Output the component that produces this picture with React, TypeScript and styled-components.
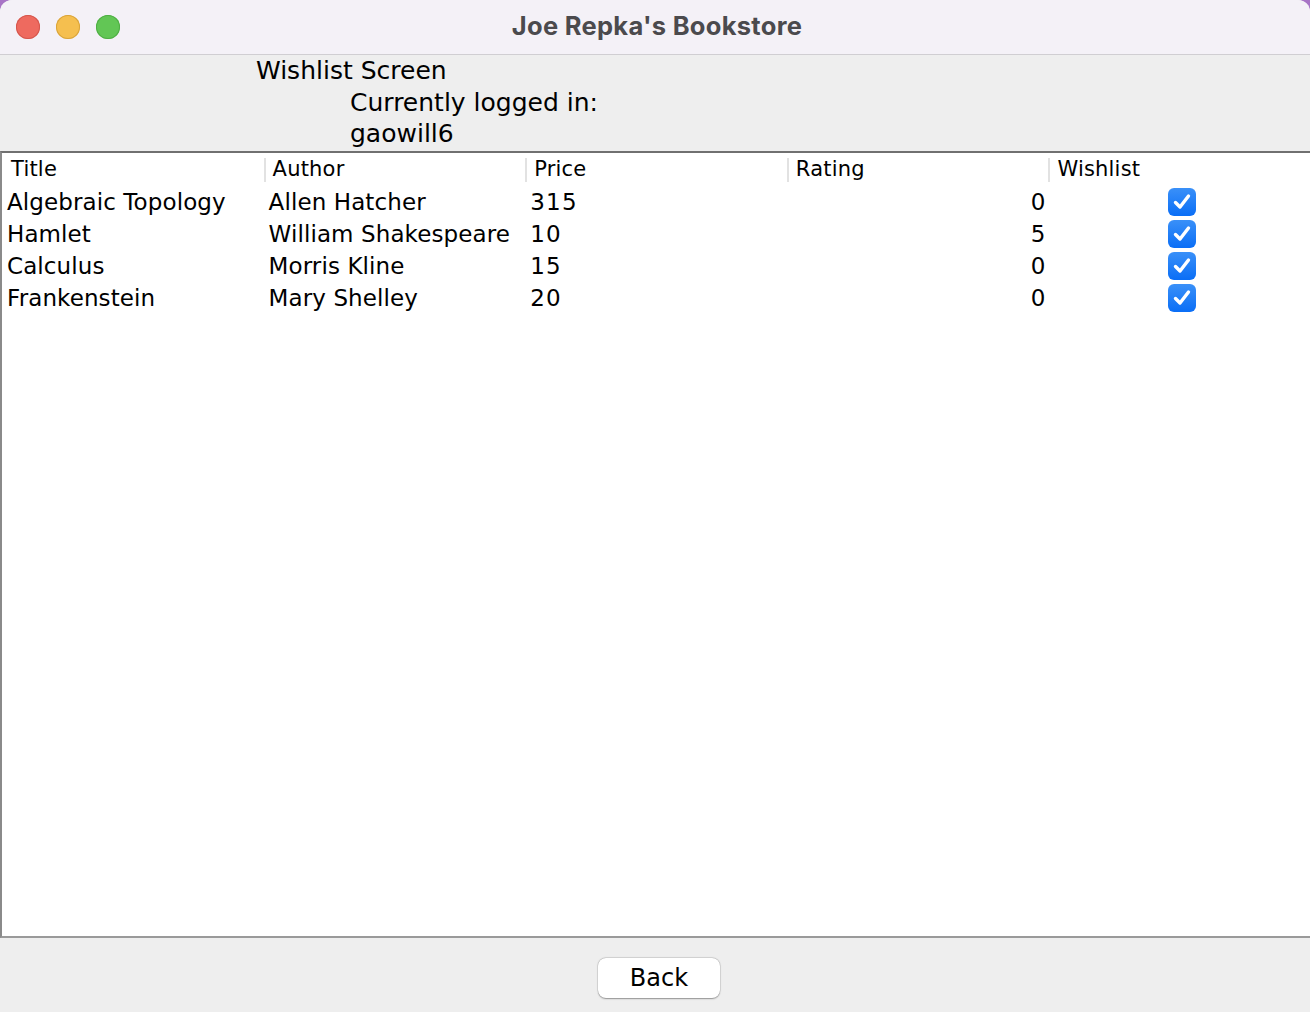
import React from "react";
import styled, { createGlobalStyle } from "styled-components";

const Global = createGlobalStyle`
  html, body { margin: 0; padding: 0; background: #a874c6; }
  body { width: 1310px; height: 1012px; overflow: hidden; }
  #root { width: 1310px; height: 1012px; }
`;

const Window = styled.div`
  width: 1310px;
  height: 1012px;
  display: flex;
  flex-direction: column;
  background: #eeeeee;
  border-radius: 12px 12px 0 0;
  overflow: hidden;
  font-family: "DejaVu Sans", "Noto Sans", sans-serif;
  color: #000;
`;

const TitleBar = styled.div`
  height: 54px;
  flex: none;
  display: grid;
  grid-template-columns: 200px 1fr 200px;
  align-items: center;
  background: #f4f1f7;
  border-bottom: 1px solid #d0ced2;
`;

const Lights = styled.div`
  display: flex;
  gap: 16px;
  padding-left: 16px;
`;

const Light = styled.span<{ $c: string; $b: string }>`
  width: 24px;
  height: 24px;
  border-radius: 50%;
  background: ${(p) => p.$c};
  box-shadow: inset 0 0 0 1px ${(p) => p.$b};
`;

const Title = styled.div`
  text-align: center;
  font-family: "Inter", "Liberation Sans", sans-serif;
  font-weight: 700;
  font-size: 25.5px;
  color: #4b4a4d;
  letter-spacing: 0.3px;
  padding-bottom: 4px;
  padding-left: 4px;
`;

const Header = styled.div`
  height: 96px;
  flex: none;
  display: flex;
  flex-direction: column;
  font-size: 25px;
  line-height: 31.5px;
  padding-top: 0;
  box-sizing: border-box;
`;

const HeaderLine = styled.div<{ $indent: number }>`
  padding-left: ${(p) => p.$indent}px;
  white-space: nowrap;
`;

const TableBox = styled.div`
  flex: 1;
  background: #fff;
  border-top: 2px solid #707070;
  border-left: 2px solid #8a8a8a;
  border-bottom: 2px solid #9a9a9a;
`;

const Grid = styled.div`
  display: grid;
  grid-template-columns: repeat(5, 1fr);
`;

const HeadCell = styled.div<{ $sep: boolean }>`
  height: 32px;
  display: flex;
  align-items: center;
  font-size: 21px;
  position: relative;
  padding-left: 9px;
  padding-bottom: 1px;
  letter-spacing: 0.2px;
  &::before {
    content: "";
    display: ${(p) => (p.$sep ? "block" : "none")};
    position: absolute;
    left: 0;
    top: 5px;
    bottom: 4px;
    width: 2px;
    background: #e2e2e2;
  }
`;

const Cell = styled.div<{ $align?: string; $num?: boolean }>`
  height: 32px;
  display: flex;
  align-items: center;
  justify-content: ${(p) => p.$align || "flex-start"};
  font-size: 23px;
  padding: 0 3px 0 5px;
  white-space: nowrap;
  letter-spacing: ${(p) => (p.$num ? "1.3px" : "0.1px")};
`;

const Check = styled.span`
  width: 28px;
  height: 28px;
  border-radius: 6px;
  background: linear-gradient(#3a90f8, #0a6ef6);
  display: flex;
  align-items: center;
  justify-content: center;
  margin-left: 3px;
`;

const Footer = styled.div`
  height: 74px;
  flex: none;
  display: flex;
  justify-content: center;
  align-items: center;
  padding-top: 6px;
  box-sizing: border-box;
`;

const Button = styled.button`
  width: 122px;
  height: 40px;
  margin-left: 8px;
  border: none;
  border-radius: 8px;
  background: #fff;
  box-shadow: 0 0.5px 1.5px rgba(0, 0, 0, 0.35), 0 0 0 0.5px rgba(0, 0, 0, 0.12);
  font-family: "DejaVu Sans", sans-serif;
  font-size: 24px;
  color: #000;
  padding: 0;
`;

const books = [
  { title: "Algebraic Topology", author: "Allen Hatcher", price: "315", rating: "0" },
  { title: "Hamlet", author: "William Shakespeare", price: "10", rating: "5" },
  { title: "Calculus", author: "Morris Kline", price: "15", rating: "0" },
  { title: "Frankenstein", author: "Mary Shelley", price: "20", rating: "0" },
];

const heads = ["Title", "Author", "Price", "Rating", "Wishlist"];

export default function App() {
  return (
    <>
      <Global />
      <Window>
        <TitleBar>
          <Lights>
            <Light $c="#ee6a5f" $b="#d4574d" />
            <Light $c="#f5bf4f" $b="#d9a43b" />
            <Light $c="#62c655" $b="#4fae44" />
          </Lights>
          <Title>Joe Repka's Bookstore</Title>
          <div />
        </TitleBar>
        <Header>
          <HeaderLine $indent={256}>Wishlist Screen</HeaderLine>
          <HeaderLine $indent={350}>Currently logged in:</HeaderLine>
          <HeaderLine $indent={350}>gaowill6</HeaderLine>
        </Header>
        <TableBox>
          <Grid>
            {heads.map((h, i) => (
              <HeadCell key={h} $sep={i > 0}>
                {h}
              </HeadCell>
            ))}
            {books.map((b) => (
              <React.Fragment key={b.title}>
                <Cell>{b.title}</Cell>
                <Cell>{b.author}</Cell>
                <Cell $num>{b.price}</Cell>
                <Cell $align="flex-end">{b.rating}</Cell>
                <Cell $align="center">
                  <Check>
                    <svg width="22" height="22" viewBox="0 0 22 22">
                      <path
                        d="M4.5 11.5 L9 16 L17.5 5"
                        fill="none"
                        stroke="#fff"
                        strokeWidth="3.4"
                        strokeLinecap="round"
                        strokeLinejoin="round"
                      />
                    </svg>
                  </Check>
                </Cell>
              </React.Fragment>
            ))}
          </Grid>
        </TableBox>
        <Footer>
          <Button>Back</Button>
        </Footer>
      </Window>
    </>
  );
}
